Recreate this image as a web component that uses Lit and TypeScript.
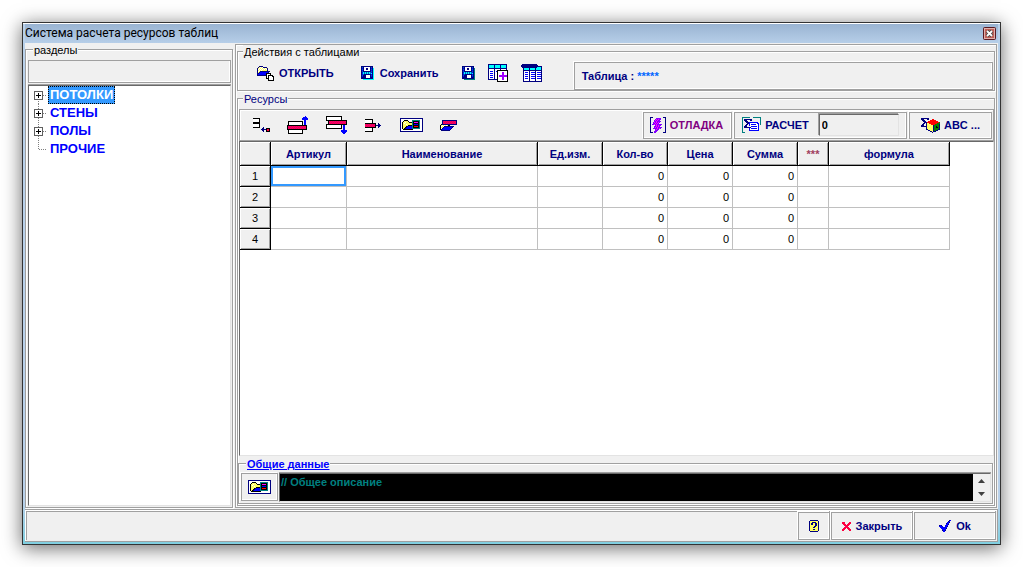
import { LitElement, html, svg, css } from "lit";
import { customElement, state } from "lit/decorators.js";

const PALETTE: Record<string, string> = {
  k: "#000000",
  n: "#000080",
  b: "#0000ff",
  w: "#ffffff",
  y: "#ffff66",
  c: "#00ffff",
  s: "#0060c0",
  r: "#ff0000",
  p: "#ff0040",
  m: "#ff00ff",
  t: "#008080",
  g: "#008000",
  v: "#8000ff",
  q: "#e60080",
};

/* Turns rows of palette letters into a crisp 1:1 SVG glyph. */
function glyph(rows: string[]) {
  const width = Math.max(...rows.map((r) => r.length));
  const runs: unknown[] = [];
  rows.forEach((row, y) => {
    let x = 0;
    while (x < row.length) {
      const ch = row[x];
      let end = x + 1;
      while (end < row.length && row[end] === ch) end++;
      if (PALETTE[ch]) {
        runs.push(svg`<rect x=${x} y=${y} width=${end - x} height="1" fill=${PALETTE[ch]}></rect>`);
      }
      x = end;
    }
  });
  return html`<svg
    aria-hidden="true"
    width=${width}
    height=${rows.length}
    viewBox="0 0 ${width} ${rows.length}"
    shape-rendering="crispEdges"
  >${runs}</svg>`;
}

const openIcon = glyph([
  "..nnnn...........",
  ".nywywnnnn.......",
  "nywywywywyn......",
  "nwywywywywn......",
  "nywywyyyyyn......",
  "nwynnnnnnnnnn....",
  "nynbbbbbbbbn.....",
  "nnbbbbbbbkkkkk...",
  "nbbbbbbbbkwwwk...",
  "nnnnnnnnnkwkkkkk.",
  ".........kwkwwwkk",
  ".........kwkwwwwk",
  ".........kkkwwwwk",
  "...........kwwwwk",
  "...........kkkkkk",
]);

const floppy = (shade: string) =>
  glyph(
    [
      "nnnnnnnnnnnn..",
      "nsnwwwwwwnsn..",
      "nbnwwnnwwnbnS.",
      "nsnwwnnwwnsnS.",
      "nbnwwwwwwnbnS.",
      "nsnnnnnnnnsnS.",
      "nbcscscscsbnS.",
      "nscscscscscnS.",
      "nbsnnnnnnnbnS.",
      "nsnnnwwwwnsnS.",
      "nbnnnwwwwnbnS.",
      "nnnnnwwwwnnnS.",
      "nnnnnnnnnnnnS.",
      "..SSSSSSSSSSS.",
    ].map((r) => r.replace(/S/g, shade)),
  );
const saveIcon = floppy("c");
const saveAsIcon = floppy("t");

const insertLeftIcon = glyph([
  "kkkkkkk..........",
  "wwwwwwk..........",
  "wwwwwwk..........",
  "wwwwwwk..........",
  "kkkkkkk..........",
  "kkkkkkk..........",
  "wwwwwwk..........",
  "wwwwwwk..........",
  "wwwwwwk..........",
  "kkkkkkk...n......",
  ".........nn..kkkk",
  "........nnnnnkppk",
  ".........nn..kppk",
  "..........n..kkkk",
]);

const removeIcon = glyph([
  "kkkkkkkk..........",
  "wwwwwwwk..........",
  "wwwwwwwk..........",
  "wwwwwwwk..........",
  "kkkkkkkkkkk..n....",
  "pqpqpqpqpqk..nn...",
  "qpqpqpqpqpknnnnn..",
  "pqpqpqpqpqk..nn...",
  "kkkkkkkkkkk..n....",
  "wwwwwwwk..........",
  "wwwwwwwk..........",
  "wwwwwwwk..........",
  "kkkkkkkk..........",
]);

const eraseIcon = glyph([
  "..nnnnnnnnnnnnnnn",
  "..npqpqpqpqpqpqpn",
  "..nqpqpqpqpqpqpqn",
  "..npqpqpqpqpqpqpn",
  ".knnnnnnnnnnnnnnn",
  "kywywywykk.......",
  "kwywnnnnnnnnnn...",
  "kyynbbbbbbbbn....",
  "kwnbbbbbbbbn.....",
  "knbbbbbbbbn......",
  ".nnnnnnnnn.......",
]);

const folderCardIcon = glyph([
  "nnnnnnnnnnnnnnnnnnnnnnn",
  "nwwwwwwwwwwwwwwwwwwwwwn",
  "nwwwkkkkwwwwttttttttwwn",
  "nwwkyyyykwwwtkkkkkktwwn",
  "nwkyywyyykkktkmmmmktwwn",
  "nwkywyyyyyyytkkkkkktwwn",
  "nwkyyywyyyyytkbbbbktwwn",
  "nwkyyyyykkkktkkkkkktwwn",
  "nwkyyyknbbbbtkrrrrktwwn",
  "nwkyyknbbbbbtkkkkkktwwn",
  "nwkyknbbbbbbttttttttwwn",
  "nwwkkkkkkkkkkwwwwwwwwwn",
  "nwwwwwwwwwwwwwwwwwwwwwn",
  "nnnnnnnnnnnnnnnnnnnnnnn",
]);

const boltIcon = glyph([
  "nnn..........nnn",
  "n.....vvvvv....n",
  "n....vmvmvv....n",
  "n...vmvmvv.....n",
  "n...vvmvvvv....n",
  "n..vmvmvmv.....n",
  "n..vvmvmv......n",
  "n.vvmvmvvvvv...n",
  "n....vmvmvv....n",
  "n...vvmvmv.....n",
  "n...vmvmvvvv...n",
  "n..vvvvmvmv....n",
  "n....vmvv......n",
  "n....vvv.......n",
  "n...vvv........n",
  "nnn.vv.......nnn",
]);

const calcIcon = glyph([
  "tttttttt...tttttttt",
  "t.................t",
  "t.nnnnnnnn........t",
  "t.nnn...nn........t",
  "t..nnn............t",
  "t...nnnbbbbbbbbb..t",
  "t....nnbwwwwwwwbb.t",
  "t...nn.bwbbbbbwwb.t",
  "t..nn..bwwwwwwwwb..",
  "t.nnn...wbbbbbbwb..",
  "t.nnnnnnnwwwwwwwb..",
  "t......bwbbbbbbwb..",
  "t......bwwwwwwwwb..",
  "t......bbbbbbbbbb..",
  "t..................",
  "ttt................",
]);

const abcIcon = glyph([
  "nnnnnnnn...........",
  "nnn...nn...rr......",
  ".nnn.....rrrrrr....",
  "..nnn..rrrrrrrrrr..",
  "...nnnrrrrrrrrrrrrg",
  "..nn.nyyrrrrrrrrggg",
  ".nn..nyyyyrrrrggggn",
  "nnn..nyyyyyyngggggn",
  "nnnnnnyyyyyynggkggn",
  ".....nyyyyyynggkkgn",
  ".....nyyyyyyngggggn",
  ".....nnyyyyynggggnn",
  ".......nnyyynggnn..",
  ".........nnynnn....",
  "...........n.......",
]);

const helpIcon = glyph([
  ".nnnnnnnn.",
  "nyyyyyyyyn",
  "nyynnnnyyn",
  "nynnyynnyn",
  "nynnyynnyn",
  "nyyyyynnyn",
  "nyyyynnyyn",
  "nyyynnyyyn",
  "nyyyyyyyyn",
  "nyyynnyyyn",
  "nyyyyyyyyn",
  ".nnnnnnnn.",
].map((r) => r.replace(/^(.*)$/, "$1")));

const crossIcon = glyph([
  "ppp....pp",
  "ppp...ppp",
  ".ppp.ppp.",
  "..ppppp..",
  "...qpp...",
  "..ppppp..",
  ".ppp.ppp.",
  "ppp...ppp",
  "pp.....pp",
]);

const checkIcon = glyph([
  "..........nb",
  ".........nb.",
  "........bbn.",
  ".......nbb..",
  ".......bbn..",
  "nbn...bbb...",
  "bbbb..bbn...",
  ".bbbbbbb....",
  "..bbbbbn....",
  "...bbbb.....",
  "...nbbn.....",
  "....bb......",
]);

const stackUpIcon = html`<svg aria-hidden="true" width="22" height="19" viewBox="0 0 22 19" shape-rendering="crispEdges">
  <rect x="1.5" y="5.5" width="14" height="4" fill="#fff" stroke="#000" />
  <rect x="1.5" y="13.5" width="14" height="4" fill="#fff" stroke="#000" />
  <rect x="0.5" y="9.5" width="19" height="4" fill="#ff0040" stroke="#000" />
  <path d="M1 10.5h18M2 11.5h17M1 12.5h18" stroke="#e60080" stroke-dasharray="1 1" />
  <path d="M18 0h1v1h1v1h1v2h-2v5h-2v-5h-2v-2h1v-1h1z" fill="#0000ff" />
</svg>`;

const stackDownIcon = html`<svg aria-hidden="true" width="22" height="19" viewBox="0 0 22 19" shape-rendering="crispEdges">
  <rect x="0.5" y="0.5" width="15" height="4" fill="#fff" stroke="#000" />
  <rect x="0.5" y="8.5" width="15" height="4" fill="#fff" stroke="#000" />
  <rect x="2.5" y="4.5" width="18" height="4" fill="#ff0040" stroke="#000" />
  <path d="M3 5.500h17M4 6.500h16M3 7.500h17" stroke="#e60080" stroke-dasharray="1 1" />
  <path d="M17 9h2v5h2v2h-1v1h-1v1h-2v-1h-1v-1h-1v-2h2z" fill="#0000ff" />
</svg>`;

const tableAddIcon = html`<svg aria-hidden="true" width="21" height="19" viewBox="0 0 21 19" shape-rendering="crispEdges">
  <rect x="0.5" y="0.5" width="18" height="15" fill="#fff" stroke="#000080" />
  <rect x="1" y="1" width="17" height="3" fill="#00ffff" />
  <path d="M0 4.5h19M6.5 0v16M12.5 0v16" stroke="#000080" />
  <path d="M2 7.5h3M2 9.5h3M2 11.5h3M2 13.5h3M8 7.5h3" stroke="#0000ff" />
  <rect x="9.5" y="6.5" width="10" height="11" rx="1" fill="#fff" stroke="#000" />
  <path d="M14 8h2v3h3v2h-3v3h-2v-3h-3v-2h3z" fill="#a000ff" />
</svg>`;

const tableHeadIcon = html`<svg aria-hidden="true" width="22" height="19" viewBox="0 0 22 19" shape-rendering="crispEdges">
  <rect x="2.5" y="2.5" width="18" height="15" fill="#fff" stroke="#000080" />
  <rect x="3" y="3" width="17" height="3" fill="#00ffff" />
  <path d="M2 6.5h19M8.5 3v15M14.5 3v15" stroke="#000080" />
  <path d="M4 8.5h3M4 10.5h3M4 12.5h3M4 14.5h3M10 8.5h4M10 10.5h4M10 12.5h4M10 14.5h4M16 8.5h4M16 10.5h4M16 12.5h4M16 14.5h4" stroke="#0000ff" />
  <path d="M1 0h15v1h1v2h-1v1h-15v-1h-1v-2h1z" fill="#000080" />
</svg>`;

interface Column {
  title: string;
  width: number;
  numeric?: boolean;
  accent?: boolean;
}

@customElement("app-root")
export class AppRoot extends LitElement {
  @state() private selected = 0;

  private sections = [
    { name: "ПОТОЛКИ", branch: true },
    { name: "СТЕНЫ", branch: true },
    { name: "ПОЛЫ", branch: true },
    { name: "ПРОЧИЕ", branch: false },
  ];

  private columns: Column[] = [
    { title: "Артикул", width: 76 },
    { title: "Наименование", width: 191 },
    { title: "Ед.изм.", width: 65 },
    { title: "Кол-во", width: 65, numeric: true },
    { title: "Цена", width: 65, numeric: true },
    { title: "Сумма", width: 65, numeric: true },
    { title: "***", width: 31, accent: true },
    { title: "формула", width: 121 },
  ];

  static styles = css`
    :host {
      display: block;
      font: 11px/13px "Liberation Sans", Arial, sans-serif;
      color: #000;
    }
    * {
      box-sizing: border-box;
    }
    svg {
      display: block;
      flex: none;
    }
    button,
    input,
    textarea {
      font: inherit;
      color: inherit;
      margin: 0;
      padding: 0;
      border: 0;
      border-radius: 0;
      background: none;
    }
    .desktop {
      display: flex;
      min-height: 100vh;
      padding: 22px;
      background: #fff;
    }
    .window {
      flex: 1;
      min-width: 0;
      display: flex;
      flex-direction: column;
      border: 1px solid #333;
      padding: 1px 2px 2px;
      background: linear-gradient(#fff 1px, #b9d1ea 1px, #b9d1ea 40px, #b9d1ea 92%, #7fcfe0);
      box-shadow: 0 3px 18px rgba(0, 0, 0, 0.6);
    }
    .titlebar {
      display: flex;
      align-items: center;
      justify-content: space-between;
      height: 19px;
      padding-right: 2px;
      background: linear-gradient(#9ab4d2, #b6cee8);
      font: 12px/19px Roboto, "Open Sans", sans-serif;
    }
    .close {
      width: 13px;
      height: 13px;
    }
    .main {
      flex: 1;
      display: flex;
      gap: 2px;
      background: #f0f0f0;
    }
    fieldset {
      min-width: 0;
      margin: 0;
      padding: 0;
      border: 1px solid #a0a0a0;
      box-shadow: inset 1px 1px #fff, 1px 1px #fff;
    }
    legend {
      height: 13px;
      margin-left: 5px;
      padding: 0 1px;
      line-height: 15px;
      background: #f0f0f0;
    }
    .navy {
      color: #000080;
    }
    .sections {
      display: flex;
      flex-direction: column;
      width: 208px;
      margin-bottom: 1px;
      padding: 4px 1px 1px 2px;
    }
    .caption {
      height: 23px;
      border: 1px solid #a0a0a0;
      box-shadow: inset -1px -1px #fff;
    }
    .sunken {
      border: 1px solid;
      border-color: #696969 #e3e3e3 #e3e3e3 #696969;
      box-shadow: 0 -1px #a0a0a0;
      background: #fff;
    }
    .tree {
      flex: 1;
      margin: 2px 0 0;
      padding: 0;
      list-style: none;
      color: #0000ff;
      font-weight: bold;
      font-size: 13px;
    }
    .node {
      display: flex;
      height: 18px;
    }
    .label {
      padding: 0 2px;
      line-height: 18px;
    }
    .label.on {
      color: #fff;
      background: #3399ff;
      outline: 1px dotted #000;
      outline-offset: -1px;
    }
    .work {
      flex: 1;
      min-width: 0;
      display: flex;
      flex-direction: column;
      gap: 1px;
      margin: 1px 1px 1px 0;
      padding: 0 1px 1px;
      border: 1px solid #a0a0a0;
      box-shadow: inset 1px 1px #fff;
    }
    .actions {
      height: 46px;
      padding: 0 1px 0 0;
    }
    .row {
      display: flex;
      align-items: center;
      height: 32px;
    }
    .tools {
      display: flex;
      align-items: center;
      gap: 12px;
      padding: 0 0 2px 19px;
    }
    .tools .open {
      margin-right: 15px;
    }
    .tools .save {
      margin-right: 11px;
    }
    .cmd {
      display: flex;
      align-items: center;
      justify-content: center;
      gap: 5px;
      font-weight: bold;
      color: #000080;
      cursor: pointer;
    }
    .panel {
      border: 1px solid #a0a0a0;
      box-shadow: inset -1px -1px #fff, -1px -1px #fff;
    }
    .current {
      flex: 1;
      align-self: flex-start;
      height: 28px;
      margin: 4px 0 0 31px;
      padding-left: 7px;
      line-height: 27px;
      font-weight: bold;
      color: #000080;
    }
    .stars {
      color: #0066ff;
    }
    .resources {
      flex: 1;
      display: flex;
      flex-direction: column;
      padding: 4px 0 1px;
    }
    .toolbar {
      display: flex;
      align-items: center;
      height: 31px;
      margin-left: 1px;
      padding-right: 1px;
      border: 1px solid #a0a0a0;
      border-width: 1px 1px 0;
      box-shadow: inset 1px 1px #fff;
    }
    .toolset {
      flex: 1;
      display: flex;
      align-items: center;
      gap: 17px;
      padding-left: 13px;
    }
    .slot {
      display: flex;
      align-items: center;
      justify-content: center;
      height: 27px;
      margin-left: 2px;
    }
    .slot .cmd {
      gap: 4px;
    }
    .debug {
      width: 89px;
      padding-right: 2px;
    }
    .debug .cmd {
      color: #800080;
    }
    .calc {
      width: 173px;
      gap: 10px;
    }
    .abc {
      width: 83px;
    }
    .result {
      width: 80px;
      height: 22px;
      padding: 0 2px;
      font-weight: bold;
      border: 1px solid;
      border-color: #696969 #e3e3e3 #e3e3e3 #696969;
      box-shadow: -1px -1px #a0a0a0;
    }
    .gridbox {
      flex: 1;
      margin: 1px 0 0 1px;
      overflow: hidden;
    }
    table {
      table-layout: fixed;
      width: 710px;
      border-collapse: separate;
      border-spacing: 0;
    }
    th {
      height: 24px;
      padding: 1px 0 0;
      text-align: center;
      color: #000080;
      background: #f0f0f0;
      border: 1px solid #000;
      border-width: 0 1px 1px 0;
      box-shadow: inset 1px 1px #fff, inset -1px -1px #a0a0a0;
    }
    tbody th {
      height: 21px;
      font-weight: normal;
      color: #000;
    }
    .accent {
      color: #a04060;
    }
    td {
      height: 21px;
      padding: 0 3px;
      border: 1px solid #c0c0c0;
      border-width: 0 1px 1px 0;
    }
    .numeric {
      text-align: right;
    }
    .active {
      box-shadow: inset 0 0 0 2px #3399ff;
    }
    .general {
      margin: 1px 1px 0 0;
      padding: 3px 1px 1px 2px;
    }
    .general legend {
      font-weight: bold;
    }
    .general a {
      color: #0000ff;
    }
    .memo {
      display: flex;
      height: 29px;
    }
    .memo .cmd {
      width: 37px;
      height: 28px;
    }
    .memobox {
      flex: 1;
      display: flex;
      margin-left: 1px;
      background: #f0f0f0;
    }
    textarea {
      flex: 1;
      resize: none;
      overflow: hidden;
      padding: 2px 1px;
      background: #000;
      color: #008080;
      font-weight: bold;
    }
    .spin {
      display: flex;
      flex-direction: column;
      width: 17px;
    }
    .spin button {
      flex: 1;
      display: flex;
      align-items: center;
      justify-content: center;
    }
    .footer {
      display: flex;
      justify-content: flex-end;
      height: 33px;
      padding: 1px;
      background: #f0f0f0;
      border: 1px solid #a0a0a0;
      border-width: 1px 1px 1px 0;
      box-shadow: inset 0 1px #fff, inset 1px 0 #fff;
    }
    .status {
      flex: 1;
      display: flex;
      justify-content: flex-end;
      gap: 1px;
      border: 1px solid #a0a0a0;
      border-width: 1px 0 0 1px;
    }
    .status .cmd {
      height: 28px;
      width: 82px;
    }
    .status .help {
      width: 32px;
    }
  `;

  private branch(expandable: boolean, first: boolean, last: boolean) {
    return html`<svg aria-hidden="true" width="19" height="18" viewBox="0 0 19 18" shape-rendering="crispEdges">
      <path d="M9.5 ${first ? 9 : 0}V${last ? 10 : 18}M10 9.5H18" stroke="#808080" stroke-dasharray="1 1" fill="none" />
      ${expandable
        ? svg`<rect x="5.5" y="5.5" width="8" height="8" fill="#fff" stroke="#606060"></rect>
            <path d="M7 9.5h5M9.5 7v5" stroke="#000"></path>`
        : ""}
    </svg>`;
  }

  private renderSections() {
    return html`<fieldset class="sections">
      <legend>разделы</legend>
      <div class="caption"></div>
      <ul class="tree sunken" role="tree">
        ${this.sections.map(
          (s, i) => html`<li class="node" role="treeitem" aria-selected=${i === this.selected} @click=${() => (this.selected = i)}>
            ${this.branch(s.branch, i === 0, i === this.sections.length - 1)}
            <span class="label ${i === this.selected ? "on" : ""}">${s.name}</span>
          </li>`,
        )}
      </ul>
    </fieldset>`;
  }

  private renderActions() {
    return html`<fieldset class="actions">
      <legend>Действия с таблицами</legend>
      <div class="row">
        <div class="tools">
          <button class="cmd open">${openIcon}ОТКРЫТЬ</button>
          <button class="cmd save">${saveIcon}Сохранить</button>
          <button class="cmd" aria-label="Сохранить как">${saveAsIcon}</button>
          <button class="cmd" aria-label="Добавить таблицу">${tableAddIcon}</button>
          <button class="cmd" aria-label="Заголовок таблицы">${tableHeadIcon}</button>
        </div>
        <div class="panel current">Таблица : <span class="stars">*****</span></div>
      </div>
    </fieldset>`;
  }

  private renderToolbar() {
    return html`<div class="toolbar">
      <div class="toolset">
        <button class="cmd" aria-label="Вставить">${insertLeftIcon}</button>
        <button class="cmd" aria-label="Строка вверх">${stackUpIcon}</button>
        <button class="cmd" aria-label="Строка вниз">${stackDownIcon}</button>
        <button class="cmd" aria-label="Удалить">${removeIcon}</button>
        <button class="cmd" aria-label="Карточка">${folderCardIcon}</button>
        <button class="cmd" aria-label="Очистить">${eraseIcon}</button>
      </div>
      <div class="panel slot debug"><button class="cmd">${boltIcon}ОТЛАДКА</button></div>
      <div class="panel slot calc">
        <button class="cmd">${calcIcon}РАСЧЕТ</button>
        <input class="result" aria-label="Результат расчета" .value=${"0"} />
      </div>
      <div class="panel slot abc"><button class="cmd">${abcIcon}ABC ...</button></div>
    </div>`;
  }

  private renderGrid() {
    return html`<div class="gridbox sunken">
      <table>
        <colgroup>
          <col style="width:31px" />
          ${this.columns.map((c) => html`<col style="width:${c.width}px" />`)}
        </colgroup>
        <thead>
          <tr>
            <th></th>
            ${this.columns.map((c) => html`<th scope="col" class=${c.accent ? "accent" : ""}>${c.title}</th>`)}
          </tr>
        </thead>
        <tbody>
          ${[1, 2, 3, 4].map(
            (n) => html`<tr>
              <th scope="row">${n}</th>
              ${this.columns.map(
                (c, i) => html`<td class="${c.numeric ? "numeric" : ""} ${n === 1 && i === 0 ? "active" : ""}">${c.numeric ? "0" : ""}</td>`,
              )}
            </tr>`,
          )}
        </tbody>
      </table>
    </div>`;
  }

  private renderGeneral() {
    return html`<fieldset class="general">
      <legend><a href="#general">Общие данные</a></legend>
      <div class="memo">
        <button class="panel cmd" aria-label="Открыть описание">${folderCardIcon}</button>
        <div class="memobox sunken">
          <textarea aria-label="Общее описание" .value=${"// Общее описание"}></textarea>
          <div class="spin">
            <button aria-label="Вверх">
              <svg width="7" height="4" viewBox="0 0 7 4"><path d="M0 4L3.500 0L7 4z" fill="#404040" /></svg>
            </button>
            <button aria-label="Вниз">
              <svg width="7" height="4" viewBox="0 0 7 4"><path d="M0 0L3.500 4L7 0z" fill="#404040" /></svg>
            </button>
          </div>
        </div>
      </div>
    </fieldset>`;
  }

  render() {
    return html`<div class="desktop">
      <div class="window">
        <header class="titlebar">
          <span>Система расчета ресурсов таблиц</span>
          <button class="close" aria-label="Закрыть окно">
            <svg width="13" height="13" viewBox="0 0 13 13">
              <rect x="0.5" y="0.5" width="12" height="12" rx="1" fill="#c06058" stroke="#5a1a22" />
              <rect x="1.500" y="1.500" width="10" height="10" fill="none" stroke="#e0b0ac" />
              <path d="M4 4l5 5M9 4l-5 5" stroke="#444" stroke-width="3.500" />
              <path d="M4 4l5 5M9 4l-5 5" stroke="#fff" stroke-width="1.800" />
            </svg>
          </button>
        </header>
        <main class="main">
          ${this.renderSections()}
          <section class="work">
            ${this.renderActions()}
            <fieldset class="resources">
              <legend class="navy">Ресурсы</legend>
              ${this.renderToolbar()} ${this.renderGrid()} ${this.renderGeneral()}
            </fieldset>
          </section>
        </main>
        <footer class="footer">
          <div class="status">
            <button class="panel cmd help" aria-label="Справка">${helpIcon}</button>
            <button class="panel cmd">${crossIcon}Закрыть</button>
            <button class="panel cmd">${checkIcon}Ok</button>
          </div>
        </footer>
      </div>
    </div>`;
  }
}
